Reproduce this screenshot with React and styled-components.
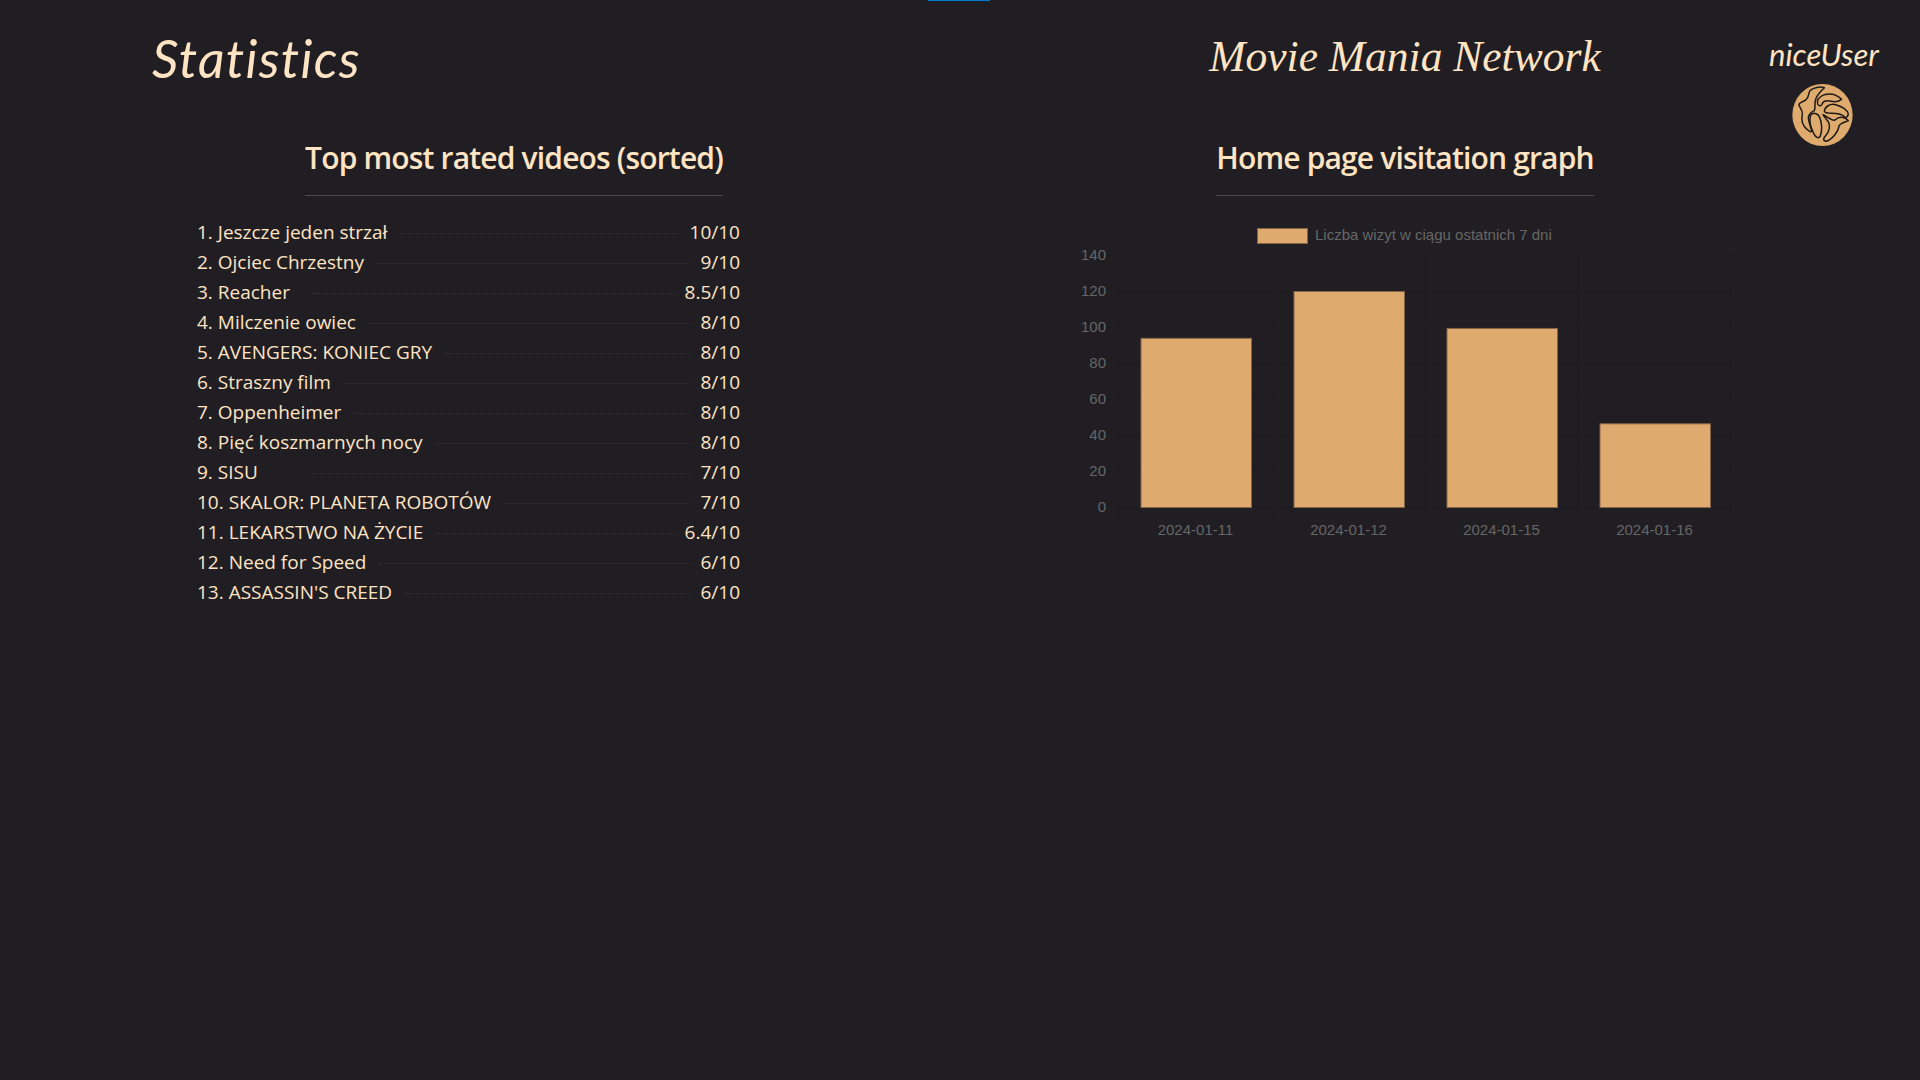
import React from "react";
import styled, { createGlobalStyle } from "styled-components";

const GlobalStyle = createGlobalStyle`
  html, body {
    margin: 0;
    background: #201e22;
    color: #ffe4c4;
    font-family: "Open Sans", "Noto Sans", sans-serif;
  }
`;

const Page = styled.div`
  height: 1080px;
  overflow: hidden;
  background: #201e22;
`;

const TopMark = styled.div`
  width: 62px;
  height: 1px;
  margin: 0 auto;
  transform: translateX(-1px);
  background: #0078d4;
`;

const Columns = styled.div`
  display: flex;
`;

const StatsColumn = styled.section`
  width: 1028px;
  display: flex;
  flex-direction: column;
`;

const GraphColumn = styled.section`
  width: 754px;
  display: flex;
  flex-direction: column;
  align-items: center;
`;

const UserColumn = styled.aside`
  width: 84px;
  display: flex;
  flex-direction: column;
  align-items: center;
`;

const PageTitle = styled.h1`
  height: 131px;
  margin: 0;
  padding: 26px 0 0 152px;
  box-sizing: border-box;
  font-family: "Lato", sans-serif;
  font-size: 52px;
  font-style: italic;
  font-weight: 400;
  letter-spacing: 1.3px;
  line-height: 62px;
`;

const BrandTitle = styled.h1`
  height: 131px;
  margin: 0;
  padding-top: 27px;
  box-sizing: border-box;
  font-family: "Liberation Serif", serif;
  font-size: 43.5px;
  font-style: italic;
  font-weight: 400;
  line-height: 56px;
  white-space: nowrap;
`;

const SectionHead = styled.h2`
  align-self: center;
  margin: 0;
  padding-bottom: 11px;
  border-bottom: 1px solid #4a4a48;
  font-size: 30px;
  font-weight: 600;
  line-height: 52px;
  letter-spacing: -0.83px;
  white-space: nowrap;
`;

const RatingList = styled.ol`
  list-style: none;
  width: 543px;
  margin: 21px 0 0 197px;
  padding: 0;
`;

const RatingRow = styled.li`
  display: flex;
  align-items: center;
  height: 30px;
  font-size: 19px;
  white-space: nowrap;
`;

const RowName = styled.span`
  min-width: 102px;
`;

const Leader = styled.span`
  flex: 1;
  margin: 2px 11px 0 13px;
  border-bottom: 1px dotted #363538;
`;

const ChartFrame = styled.svg`
  display: block;
  width: 690px;
  height: 320px;
  margin-top: 24px;
`;

const UserName = styled.div`
  margin-top: 33px;
  font-family: "Lato", sans-serif;
  font-size: 31px;
  font-style: italic;
  line-height: 40px;
  white-space: nowrap;
`;

const Avatar = styled.svg`
  display: block;
  width: 61px;
  height: 62px;
  margin: 10px 3px 0 0;
`;

const ratings = [
  ["1. Jeszcze jeden strzał", "10/10"],
  ["2. Ojciec Chrzestny", "9/10"],
  ["3. Reacher", "8.5/10"],
  ["4. Milczenie owiec", "8/10"],
  ["5. AVENGERS: KONIEC GRY", "8/10"],
  ["6. Straszny film", "8/10"],
  ["7. Oppenheimer", "8/10"],
  ["8. Pięć koszmarnych nocy", "8/10"],
  ["9. SISU", "7/10"],
  ["10. SKALOR: PLANETA ROBOTÓW", "7/10"],
  ["11. LEKARSTWO NA ŻYCIE", "6.4/10"],
  ["12. Need for Speed", "6/10"],
  ["13. ASSASSIN'S CREED", "6/10"],
];

const visits = [
  { day: "2024-01-11", count: 94 },
  { day: "2024-01-12", count: 120 },
  { day: "2024-01-15", count: 99.5 },
  { day: "2024-01-16", count: 46.5 },
];

// chart coords are relative to the svg frame (page x - 1060, page y - 220)
const plotLeft = 59;
const plotTop = 35;
const zeroY = 287;
const slot = 153;
const pxPerUnit = 1.8;
const barWidth = 110.5;

const VisitChart = () => (
  <ChartFrame viewBox="0 0 690 320">
    <rect x="197.5" y="8.5" width="50" height="15" fill="#dfaa6e" stroke="#85654a" />
    <text x="255" y="20" fontFamily="Liberation Sans" fontSize="15" fill="#666">
      Liczba wizyt w ciągu ostatnich 7 dni
    </text>
    {[0, 20, 40, 60, 80, 100, 120, 140].map((tick) => {
      const y = zeroY - tick * pxPerUnit + 0.5;
      return (
        <g key={tick}>
          <line x1={plotLeft - 9} x2={plotLeft + slot * 4} y1={y} y2={y} stroke="#1c1b1e" />
          <text x="46" y={y + 4.5} textAnchor="end" fontFamily="Liberation Sans" fontSize="15" fill="#666">
            {tick}
          </text>
        </g>
      );
    })}
    {[0, 1, 2, 3, 4].map((i) => (
      <line
        key={i}
        x1={plotLeft + slot * i + 0.5}
        x2={plotLeft + slot * i + 0.5}
        y1={plotTop}
        y2={zeroY + 10}
        stroke="#1c1b1e"
      />
    ))}
    {visits.map((v, i) => {
      const h = v.count * pxPerUnit;
      const x = plotLeft + slot * i + 22;
      return (
        <g key={v.day}>
          <rect x={x} y={zeroY - h + 0.5} width={barWidth} height={h} fill="#dfaa6e" stroke="#85654a" />
          <text
            x={plotLeft + slot * i + 76.5}
            y="315"
            textAnchor="middle"
            fontFamily="Liberation Sans"
            fontSize="15"
            fill="#666"
          >
            {v.day}
          </text>
        </g>
      );
    })}
  </ChartFrame>
);

const BrainAvatar = () => (
  <Avatar viewBox="22 12 181 186">
    <ellipse cx="112.5" cy="105" rx="90.5" ry="93" fill="#dfaa6e" />
    <g fill="none" stroke="#1d1a17" strokeWidth="4.5" strokeLinejoin="round" strokeLinecap="round">
      <path d="M118 23 C105 18 85 24 76 31 C68 40 74 52 62 60 C52 66 40 68 42 76 C46 86 54 92 52 104 C48 122 54 138 66 148 C72 154 80 158 80 152 C78 142 70 128 70 112 C72 100 80 96 88 92 C92 82 88 70 92 58 C96 44 108 34 118 23 Z" />
      <path d="M170 58 C158 46 140 38 118 44 C104 50 94 60 98 72 C102 80 110 78 112 70 C116 62 126 60 140 64 C152 66 164 64 170 58 Z" />
      <path d="M118 94 C120 80 134 70 152 74 C170 78 188 90 190 102 C188 110 184 114 180 112 C172 102 158 100 140 100 C130 100 120 100 118 94 Z" />
      <path d="M76 108 C82 96 98 98 104 112 C110 128 112 150 106 168 C100 178 92 172 86 160 C78 144 72 124 76 108 Z" />
      <path d="M150 120 C162 108 180 110 190 122 C182 126 166 128 162 138 C160 156 140 180 122 184 C112 182 116 172 124 164 C132 154 136 144 132 130 C128 120 118 112 114 104 C124 108 140 124 150 120 Z" />
    </g>
  </Avatar>
);

export default function App() {
  return (
    <Page>
      <GlobalStyle />
      <TopMark />
      <Columns>
        <StatsColumn>
          <PageTitle>Statistics</PageTitle>
          <SectionHead>Top most rated videos (sorted)</SectionHead>
          <RatingList>
            {ratings.map(([name, score]) => (
              <RatingRow key={name}>
                <RowName>{name}</RowName>
                <Leader />
                <span>{score}</span>
              </RatingRow>
            ))}
          </RatingList>
        </StatsColumn>
        <GraphColumn>
          <BrandTitle>Movie Mania Network</BrandTitle>
          <SectionHead>Home page visitation graph</SectionHead>
          <VisitChart />
        </GraphColumn>
        <UserColumn>
          <UserName>niceUser</UserName>
          <BrainAvatar />
        </UserColumn>
      </Columns>
    </Page>
  );
}
